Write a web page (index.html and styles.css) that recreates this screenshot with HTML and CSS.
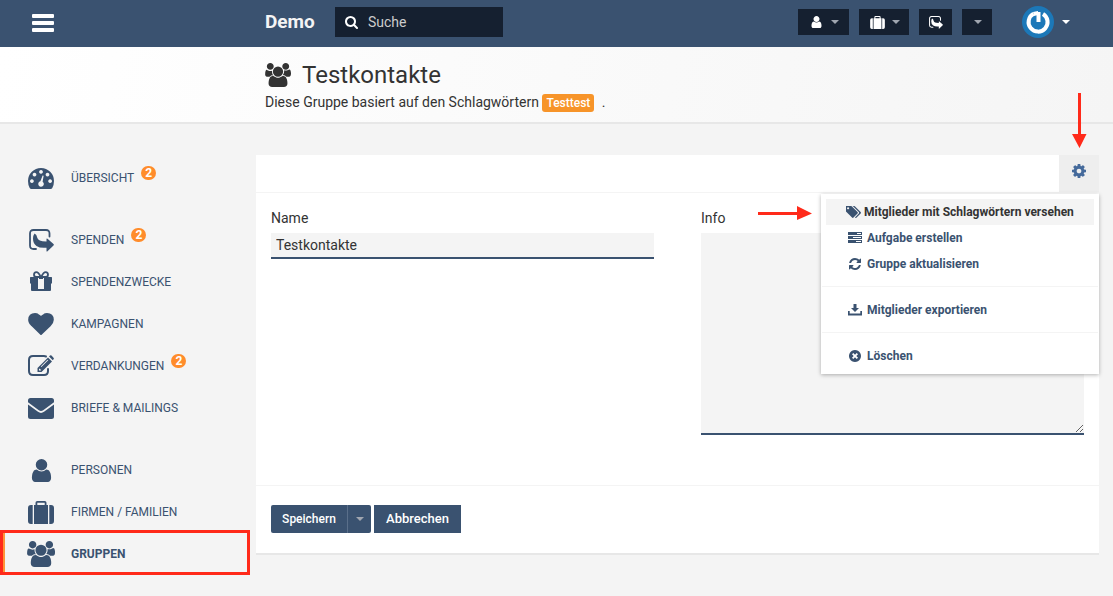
FILE: index.html
```html
<!DOCTYPE html>
<html lang="de">
<head>
<meta charset="utf-8">
<meta name="viewport" content="width=device-width, initial-scale=1">
<title>Testkontakte</title>
<link rel="stylesheet" href="styles.css">
</head>
<body>
<svg class="sprite" aria-hidden="true">
  <symbol id="i-users" viewBox="0 0 1920 1792"><path d="M593 896q-162 5-265 128h-134q-82 0-138-40.500t-56-118.500q0-353 124-353 6 0 43.500 21t97.500 42.500 119 21.500q67 0 133-23-5 37-5 66 0 159 93 287zm1071 637q0 120-73 189.500t-194 69.500h-874q-121 0-194-69.500t-73-189.500q0-53 3.500-103.500t14-109 26.500-108.500 43-97.500 62-81 85.500-53.500 111.500-20q10 0 43 21.500t73 48 107 48 135 21.500 135-21.500 107-48 73-48 43-21.500q61 0 111.500 20t85.500 53.500 62 81 43 97.500 26.500 108.500 14 109 3.500 103.500zm-1024-1277q0 106-75 181t-181 75-181-75-75-181 75-181 181-75 181 75 75 181zm704 384q0 159-112.500 271.500t-271.500 112.500-271.500-112.500-112.500-271.500 112.500-271.500 271.500-112.500 271.500 112.500 112.500 271.500zm576 225q0 78-56 118.500t-138 40.500h-134q-103-123-265-128 93-128 93-287 0-29-5-66 66 23 133 23 59 0 119-21.500t97.500-42.500 43.500-21q124 0 124 353zm-128-609q0 106-75 181t-181 75-181-75-75-181 75-181 181-75 181 75 75 181z"/></symbol>
  <symbol id="i-user" viewBox="256 128 1280 1536"><path d="M1536 1399q0 109-62.500 187t-150.500 78h-854q-88 0-150.500-78t-62.500-187q0-85 8.500-160.500t31.500-152 58.500-131 94-89 134.500-34.500q131 128 313 128t313-128q76 0 134.500 34.500t94 89 58.500 131 31.500 152 8.500 160.500zm-256-887q0 159-112.500 271.500t-271.500 112.500-271.500-112.500-112.500-271.500 112.500-271.500 271.500-112.500 271.500 112.500 112.500 271.500z"/></symbol>
  <symbol id="i-cog" viewBox="128 128 1536 1536"><path d="M1152 896q0-106-75-181t-181-75-181 75-75 181 75 181 181 75 181-75 75-181zm512-109v222q0 12-8 23t-20 13l-185 28q-19 54-39 91 35 50 107 138 10 12 10 25t-9 23q-27 37-99 108t-94 71q-12 0-26-9l-138-108q-44 23-91 38-16 136-29 186-7 28-36 28h-222q-14 0-24.500-8.500t-11.500-21.500l-28-184q-49-16-90-37l-141 107q-10 9-25 9-14 0-25-11-126-114-165-168-7-10-7-23 0-12 8-23 15-21 51-66.500t54-70.500q-27-50-41-99l-183-27q-13-2-21-12.500t-8-23.500v-222q0-12 8-23t19-13l186-28q14-46 39-92-40-57-107-138-10-12-10-24 0-10 9-23 26-36 98.500-107.500t94.500-71.500q13 0 26 10l138 107q44-23 91-38 16-136 29-186 7-28 36-28h222q14 0 24.500 8.500t11.500 21.500l28 184q49 16 90 37l142-107q9-9 24-9 13 0 25 10 129 119 165 170 7 8 7 22 0 12-8 23-15 21-51 66.500t-54 70.500q26 50 41 98l183 28q13 2 21 12.500t8 23.500z"/></symbol>
  <symbol id="i-refresh" viewBox="128 128 1536 1536"><path d="M1639 1056q0 5-1 7-64 268-268 434.500t-478 166.500q-146 0-282.500-55t-243.500-157l-129 129q-19 19-45 19t-45-19-19-45v-448q0-26 19-45t45-19h448q26 0 45 19t19 45-19 45l-137 137q71 66 161 102t187 36q134 0 250-65t186-179q11-17 53-117 8-23 30-23h192q13 0 22.500 9.500t9.500 22.500zm25-800v448q0 26-19 45t-45 19h-448q-26 0-45-19t-19-45 19-45l138-138q-148-137-349-137-134 0-250 65t-186 179q-11 17-53 117-8 23-30 23h-199q-13 0-22.500-9.500t-9.500-22.500v-7q65-268 270-434.500t480-166.500q146 0 284 55.500t245 156.500l130-129q19-19 45-19t45 19 19 45z"/></symbol>
  <symbol id="i-tags" viewBox="192 192 1844 1452"><path d="M576 448q0-53-37.500-90.500t-90.500-37.500-90.500 37.500-37.500 90.500 37.500 90.500 90.500 37.500 90.500-37.500 37.500-90.500zm1067 576q0 53-37 90l-491 492q-39 37-91 37-53 0-90-37l-715-716q-38-37-64.500-101t-26.500-117v-416q0-52 38-90t90-38h416q53 0 117 26.500t102 64.500l715 714q37 39 37 91zm384 0q0 53-37 90l-491 492q-39 37-91 37-36 0-59-14t-53-45l470-470q37-37 37-90 0-52-37-91l-715-714q-38-38-102-64.500t-117-26.500h224q53 0 117 26.500t102 64.500l715 714q37 39 37 91z"/></symbol>
  <symbol id="i-search" viewBox="64 128 1664 1664"><path d="M1216 832q0-185-131.500-316.500t-316.500-131.500-316.500 131.500-131.500 316.500 131.500 316.500 316.500 131.500 316.500-131.500 131.500-316.500zm512 832q0 52-38 90t-90 38q-54 0-90-38l-343-342q-179 124-399 124-143 0-273.500-55.500t-225-150-150-225-55.500-273.500 55.500-273.500 150-225 225-150 273.500-55.500 273.500 55.500 225 150 150 225 55.500 273.500q0 220-124 399l343 343q37 37 37 90z"/></symbol>
  <symbol id="i-heart" viewBox="0 128 1792 1536"><path d="M896 1664q-26 0-44-18l-624-602q-10-8-27.500-26t-55.500-65.500-68-97.500-53.500-121-23.500-138q0-220 127-344t351-124q62 0 126.500 21.500t120 58 95.500 68.500 76 68q36-36 76-68t95.500-68.500 120-58 126.500-21.500q224 0 351 124t127 344q0 221-229 450l-623 600q-18 18-44 18z"/></symbol>
  <symbol id="i-gauge" viewBox="0 0 26 21"><path fill-rule="evenodd" d="M13 0A13 13 0 0 1 26 13Q26 17 24.300 20Q23.700 21 22.700 21H3.300Q2.300 21 1.700 20Q0 17 0 13A13 13 0 0 1 13 0ZM13 2a1.900 1.900 0 1 0 .01 0ZM6.500 4.700a1.900 1.900 0 1 0 .01 0ZM19.500 4.700a1.900 1.900 0 1 0 .01 0ZM3.900 11.200a1.900 1.900 0 1 0 .01 0ZM22.100 11.200a1.900 1.900 0 1 0 .01 0ZM14.600 7.600L12.400 13.300A2.800 2.800 0 1 0 14.600 13.700L15.600 8Q15.400 7.100 14.600 7.600Z"/></symbol>
  <symbol id="i-share" viewBox="0 0 25 23"><path fill="none" stroke="currentColor" stroke-width="1.800" stroke-linecap="round" d="M20.500 7.500V4.500Q20.500 1 17 1H4.500Q1 1 1 4.500V16.500Q1 20 4.500 20H7"/><path d="M5.500 4.500Q7.800 5.500 8.200 8.500Q9 12.600 17.500 12.500V10Q17.500 9 18.500 9.800L24.500 15Q25.200 15.700 24.500 16.400L18.500 22.300Q17.500 23 17.500 22V18.700Q11 19.400 7.500 17Q4 14.500 4 9.500Q4 6.500 5.500 4.500Z"/></symbol>
  <symbol id="i-gift" viewBox="0 0 24 22"><path fill="none" stroke="currentColor" stroke-width="1.800" d="M11.800 6H7.500Q5 6 5 3.700Q5 1.200 7.300 1.200Q9.500 1.200 11.800 6ZM12.200 6H16.500Q19 6 19 3.700Q19 1.200 16.700 1.200Q14.500 1.200 12.200 6Z"/><path d="M1.500 6H9V20H3Q2 20 2 19V12.500H1V6.500ZM15 6H22.500L23 6.500V12.500H22V19Q22 20 21 20H15ZM10 6H14V8H10ZM9 18H15V20H9Z"/></symbol>
  <symbol id="i-edit" viewBox="0 0 26 22"><path fill="none" stroke="currentColor" stroke-width="2" stroke-linecap="round" d="M18 1.500Q17 1 16 1H5Q1 1 1 5V16Q1 20 5 20H16Q20 20 20 16V14"/><path fill-rule="evenodd" d="M20 2.500L24 6.500L13.500 17H9.500V13ZM11.300 13.500L11 14V15.500H12.700L13.200 15ZM19.500 4.700L12.800 11.500L13.400 12L20.200 5.200ZM21 1.500L22 .5Q22.700-.2 23.500 .5L25.500 2.700Q26.300 3.500 25.500 4.300L24.800 5.200Z"/></symbol>
  <symbol id="i-mail" viewBox="0 0 26 21"><path d="M2.500 0H23.500Q26 0 26 2.500V4.300L15.200 12.300Q13 13.800 10.800 12.300L0 4.300V2.500Q0 0 2.500 0ZM0 6.500L10 13.800Q13 16 16 13.800L26 6.500V18.500Q26 21 23.500 21H2.500Q0 21 0 18.500Z"/></symbol>
  <symbol id="i-case" viewBox="0 0 26 23"><path fill-rule="evenodd" d="M6 4H7.500V1.800Q7.500 0 9.300 0H16.700Q18.500 0 18.500 1.800V4H20V23H6ZM9.300 4H16.700V1.800H9.300ZM4.700 4V23H3Q0 23 0 20V7Q0 4 3 4ZM21.300 4H23Q26 4 26 7V20Q26 23 23 23H21.300Z"/></symbol>
  <symbol id="i-tasks" viewBox="0 0 14 12"><path fill-rule="evenodd" d="M0 0H14V3H0ZM0 4H14V7H0ZM0 8H14V11H0ZM9 1H13V2H9ZM5 5H13V6H5ZM8 9H13V10H8Z"/></symbol>
  <symbol id="i-download" viewBox="0 0 14 12"><path d="M5.500 0H8.500V4H11L7 8L3 4H5.500ZM0 7H1.700V9.500H12.300V7H14V11.500H0Z"/></symbol>
  <symbol id="i-remove" viewBox="0 0 12 12"><path fill-rule="evenodd" d="M6 0A6 6 0 1 1 5.990 0ZM4.300 3L3 4.300L4.700 6L3 7.700L4.300 9L6 7.300L7.700 9L9 7.700L7.300 6L9 4.300L7.700 3L6 4.700Z"/></symbol>
  <symbol id="i-caret" viewBox="0 0 8 4"><path d="M0 0H8L4 4Z"/></symbol>
</svg>

<header class="topbar">
  <div class="topbar-menu">
    <button class="burger" type="button" aria-label="Menü"><span></span><span></span><span></span></button>
  </div>
  <a class="brand" href="#">Demo</a>
  <label class="search">
    <svg class="search-icon" aria-hidden="true"><use href="#i-search"/></svg>
    <input type="search" placeholder="Suche" aria-label="Suche">
  </label>
  <div class="quick">
    <button class="quick-button" type="button" aria-label="Personen"><svg class="quick-user"><use href="#i-user"/></svg><svg class="caret"><use href="#i-caret"/></svg></button>
    <button class="quick-button quick-firms" type="button" aria-label="Firmen"><svg class="quick-case"><use href="#i-case"/></svg><svg class="caret"><use href="#i-caret"/></svg></button>
    <button class="quick-button quick-single" type="button" aria-label="Spenden"><svg class="quick-share"><use href="#i-share"/></svg></button>
    <button class="quick-button quick-more" type="button" aria-label="Mehr"><svg class="caret"><use href="#i-caret"/></svg></button>
  </div>
  <button class="account" type="button" aria-label="Konto">
    <svg class="avatar" viewBox="0 0 32 32"><circle cx="16" cy="16" r="16" fill="#1c78b8"/><path d="M11.500 7.800A9.500 9.500 0 1 0 21 8M16.500 6V16" fill="none" stroke="#fff" stroke-width="4"/><path d="M11 6L16 5V9L12 10Z" fill="#fff"/></svg>
    <svg class="caret caret-light"><use href="#i-caret"/></svg>
  </button>
</header>

<div class="page-head">
  <h1 class="page-title"><svg class="title-icon" aria-hidden="true"><use href="#i-users"/></svg>Testkontakte</h1>
  <p class="page-info">Diese Gruppe basiert auf den Schlagwörtern <span class="tag">Testtest</span> <span class="stop">.</span></p>
</div>

<div class="layout">
  <nav class="sidebar">
    <ul class="nav-group">
      <li><a class="nav-link" href="#"><span class="nav-icon"><svg class="s-gauge"><use href="#i-gauge"/></svg></span>ÜBERSICHT<span class="badge">2</span></a></li>
    </ul>
    <ul class="nav-group">
      <li><a class="nav-link" href="#"><span class="nav-icon"><svg class="s-share"><use href="#i-share"/></svg></span>SPENDEN<span class="badge">2</span></a></li>
      <li><a class="nav-link" href="#"><span class="nav-icon"><svg class="s-gift"><use href="#i-gift"/></svg></span>SPENDENZWECKE</a></li>
      <li><a class="nav-link" href="#"><span class="nav-icon"><svg class="s-heart"><use href="#i-heart"/></svg></span>KAMPAGNEN</a></li>
      <li><a class="nav-link" href="#"><span class="nav-icon"><svg class="s-edit"><use href="#i-edit"/></svg></span>VERDANKUNGEN<span class="badge">2</span></a></li>
      <li><a class="nav-link" href="#"><span class="nav-icon"><svg class="s-gauge"><use href="#i-mail"/></svg></span>BRIEFE &amp; MAILINGS</a></li>
    </ul>
    <ul class="nav-group">
      <li><a class="nav-link" href="#"><span class="nav-icon"><svg class="s-user"><use href="#i-user"/></svg></span>PERSONEN</a></li>
      <li><a class="nav-link" href="#"><span class="nav-icon"><svg class="s-case"><use href="#i-case"/></svg></span>FIRMEN / FAMILIEN</a></li>
      <li><a class="nav-link active" href="#" aria-current="page"><span class="nav-icon"><svg class="s-users"><use href="#i-users"/></svg></span>GRUPPEN</a></li>
    </ul>
  </nav>

  <main class="panel">
    <div class="panel-bar">
      <button class="gear" type="button" aria-label="Aktionen"><svg><use href="#i-cog"/></svg></button>
      <svg class="arrow-down" viewBox="0 0 16 55" aria-hidden="true"><path d="M7 0H10V41H15.500L8.500 55L1 41H7Z"/></svg>
      <div class="menu">
        <button class="menu-item current" type="button"><svg class="m-tags"><use href="#i-tags"/></svg>Mitglieder mit Schlagwörtern versehen</button>
        <button class="menu-item" type="button"><svg><use href="#i-tasks"/></svg>Aufgabe erstellen</button>
        <button class="menu-item" type="button"><svg><use href="#i-refresh"/></svg>Gruppe aktualisieren</button>
        <hr class="menu-line">
        <button class="menu-item" type="button"><svg><use href="#i-download"/></svg>Mitglieder exportieren</button>
        <hr class="menu-line">
        <button class="menu-item" type="button"><svg><use href="#i-remove"/></svg>Löschen</button>
        <svg class="arrow-right" viewBox="0 0 54 16" aria-hidden="true"><path d="M0 7H39V1L54 8.500L39 15V10H0Z"/></svg>
      </div>
    </div>
    <form>
      <div class="fields">
        <div class="field">
          <label for="name">Name</label>
          <input class="control" id="name" type="text" value="Testkontakte">
        </div>
        <div class="field">
          <label for="info">Info</label>
          <textarea class="control area" id="info"></textarea>
        </div>
      </div>
      <div class="actions">
        <div class="split">
          <button class="btn btn-save" type="button">Speichern</button>
          <button class="btn btn-more" type="button" aria-label="Weitere Optionen"><svg class="caret"><use href="#i-caret"/></svg></button>
        </div>
        <button class="btn btn-cancel" type="button">Abbrechen</button>
      </div>
    </form>
  </main>
</div>
</body>
</html>
```

FILE: styles.css
```css
:root {
  --blue: #3a5270;
  --dark: #152030;
  --bg: #f4f4f4;
  --text: #333;
  --orange: #f79429;
  --mark: #ff2a1a;
}

* { box-sizing: border-box; }

body {
  margin: 0;
  background: var(--bg);
  color: var(--text);
  font: 14px/20px Roboto, "Liberation Sans", sans-serif;
}

button, input, textarea { font: inherit; color: inherit; }
button { border: 0; background: none; padding: 0; cursor: pointer; }
svg { display: block; flex: none; fill: currentColor; }
a { color: inherit; text-decoration: none; }
.sprite { position: absolute; width: 0; height: 0; }

.caret { width: 8px; height: 4px; color: #a0a6b0; }
.caret-light { color: #fff; }

/* Top bar */
.topbar {
  display: flex;
  align-items: center;
  height: 47px;
  padding: 0 43px 3px 0;
  background: var(--blue);
  color: #fff;
}
.topbar-menu { width: 265px; padding-left: 32px; }
.burger { display: flex; flex-direction: column; gap: 3px; width: 22px; padding-top: 2px; }
.burger span { height: 4px; border-radius: 1px; background: #fff; }
.brand { width: 70px; font-size: 19px; font-weight: 700; color: #f4f4f4; }
.search {
  display: flex;
  align-items: center;
  gap: 10px;
  width: 168px;
  height: 30px;
  padding: 0 10px;
  background: var(--dark);
}
.search-icon { width: 13px; height: 13px; }
.search input {
  width: 100%;
  min-width: 0;
  padding: 0;
  border: 0;
  outline: 0;
  background: none;
}
.search input::placeholder { color: #ccc; opacity: 1; }
.quick { display: flex; gap: 10px; margin-left: auto; }
.quick-button {
  display: flex;
  align-items: center;
  justify-content: center;
  gap: 9px;
  width: 51px;
  height: 26px;
  padding-left: 2px;
  background: var(--dark);
}
.quick-firms { width: 50px; gap: 7px; }
.quick-single { width: 33px; padding: 0; }
.quick-more { width: 30px; }
.quick-user { width: 11px; height: 12px; }
.quick-case { width: 15px; height: 13px; }
.quick-share { width: 14px; height: 13px; }
.account { display: flex; align-items: center; gap: 8px; margin-left: 30px; }
.avatar { width: 32px; height: 32px; }

/* Page heading */
.page-head {
  padding: 14px 14px 9px 265px;
  border-bottom: 2px solid #e7e7e7;
  background: linear-gradient(100deg, #fff, #f5f5f5);
}
.page-title {
  display: flex;
  align-items: center;
  gap: 11px;
  margin: 0;
  font-size: 25px;
  font-weight: 400;
  line-height: 28px;
}
.title-icon { width: 26px; height: 24px; }
.page-title { font-size: 24px; }
.page-info { margin: 3px 0 0; }
.tag {
  padding: 2px 4px;
  border-radius: 3px;
  background: var(--orange);
  color: #fff;
  font-size: 12px;
  font-weight: 500;
}
.stop { margin-left: 4px; }

/* Body */
.layout {
  display: grid;
  grid-template-columns: 250px minmax(0, 1fr);
  column-gap: 6px;
  padding: 31px 14px 20px 0;
}

/* Sidebar */
.sidebar { display: flex; flex-direction: column; gap: 20px; padding-top: 1px; }
.nav-group { margin: 0; padding: 0; list-style: none; }
.nav-link {
  position: relative;
  display: flex;
  align-items: center;
  height: 42px;
  padding-top: 2px;
  color: var(--blue);
  font-size: 12px;
}
.nav-icon { display: flex; justify-content: center; width: 82px; margin-right: -11px; }
.badge {
  width: 15px;
  height: 14px;
  margin: 0 0 10px 7px;
  border-radius: 7px;
  background: #ff8c2b;
  color: #fff;
  font-weight: 700;
  line-height: 14px;
  text-align: center;
}
.active { border-left: 5px solid #ff9437; font-weight: 700; }
.active .nav-icon { width: 72px; margin-right: -6px; }
.active::after {
  content: "";
  position: absolute;
  inset: -2px 0 -1px -5px;
  border: 3px solid var(--mark);
}
.s-gauge { width: 26px; height: 21px; }
.s-edit { width: 26px; height: 22px; }
.s-share { width: 25px; height: 23px; }
.s-gift { width: 24px; height: 22px; }
.s-heart { width: 26px; height: 22px; }
.s-user { width: 21px; height: 23px; }
.s-case { width: 26px; height: 23px; }
.s-users { width: 28px; height: 26px; }

/* Panel */
.panel { align-self: start; border-bottom: 2px solid #e7e7e7; background: #fff; }
.panel-bar {
  position: relative;
  display: flex;
  justify-content: flex-end;
  height: 38px;
  border-bottom: 1px solid var(--bg);
}
.gear {
  display: grid;
  place-items: center;
  width: 40px;
  padding-bottom: 5px;
  background: #eee;
  color: #456a9b;
}
.gear svg { width: 14px; height: 14px; }
.fields { display: grid; grid-template-columns: 1fr 1fr; gap: 47px; padding: 15px 15px 50px; }
.field { display: flex; flex-direction: column; align-items: flex-start; gap: 5px; }
.control {
  width: 100%;
  height: 26px;
  padding: 0 5px;
  border: 0;
  border-bottom: 2px solid var(--blue);
  border-radius: 0;
  outline: 0;
  background: var(--bg);
}
.area { height: 202px; resize: both; }
.actions { display: flex; gap: 3px; padding: 19px 15px 20px; border-top: 1px solid var(--bg); }
.split { display: flex; overflow: hidden; border-radius: 2px; }
.btn { height: 28px; background: var(--blue); color: #fff; font-weight: 500; }
.btn-save { width: 76px; font-size: 12px; }
.btn-more { display: grid; place-items: center; width: 24px; border-left: 1px solid #5a6f8a; }
.btn-cancel { width: 87px; font-size: 13px; }

/* Action menu */
.menu {
  position: absolute;
  z-index: 1;
  top: 39px;
  right: 0;
  width: 278px;
  padding: 5px 0;
  background: #fff;
  box-shadow: 0 1px 4px rgba(0, 0, 0, .3);
}
.menu-item {
  display: flex;
  align-items: center;
  gap: 5px;
  width: 268px;
  height: 26px;
  margin: 0 5px;
  padding-left: 22px;
  color: var(--blue);
  font-size: 12px;
  font-weight: 700;
}
.menu-item svg { width: 14px; height: 12px; color: var(--blue); }
.menu-item .m-tags { width: 15px; }
.menu-item.current { gap: 3px; padding-left: 20px; background: var(--bg); color: var(--text); }
.menu-line { margin: 9px 1px 10px; border: 0; border-top: 1px solid var(--bg); }

/* Pointers */
.arrow-down, .arrow-right { position: absolute; color: var(--mark); }
.arrow-down { right: 12px; bottom: 44px; width: 16px; height: 55px; }
.arrow-right { top: 11px; right: 287px; width: 54px; height: 16px; }
```
